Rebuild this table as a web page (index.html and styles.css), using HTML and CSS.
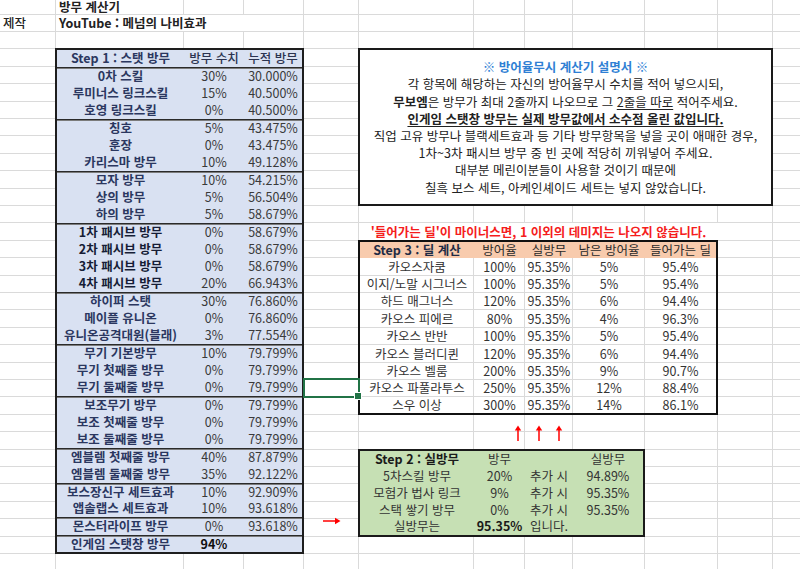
FILE: index.html
```html
<!DOCTYPE html>
<html lang="ko">
<head>
<meta charset="utf-8">
<title>방무 계산기</title>
<link rel="stylesheet" href="styles.css">
</head>
<body>
<div class="sheet">
  <div class="cell title">방무 계산기</div>
  <div class="cell maker-label">제작</div>
  <div class="cell maker">YouTube : 메넘의 나비효과</div>

  <section class="step1">
    <div class="s1-row head"><span class="lbl">Step 1 : 스탯 방무</span><span class="hd">방무 수치</span><span class="hd">누적 방무</span></div>
    <div class="s1-row sep"><span class="lbl">0차 스킬</span><span>30%</span><span>30.000%</span></div>
    <div class="s1-row"><span class="lbl">루미너스 링크스킬</span><span>15%</span><span>40.500%</span></div>
    <div class="s1-row"><span class="lbl">호영 링크스킬</span><span>0%</span><span>40.500%</span></div>
    <div class="s1-row sep"><span class="lbl">칭호</span><span>5%</span><span>43.475%</span></div>
    <div class="s1-row"><span class="lbl">훈장</span><span>0%</span><span>43.475%</span></div>
    <div class="s1-row"><span class="lbl">카리스마 방무</span><span>10%</span><span>49.128%</span></div>
    <div class="s1-row sep"><span class="lbl">모자 방무</span><span>10%</span><span>54.215%</span></div>
    <div class="s1-row"><span class="lbl">상의 방무</span><span>5%</span><span>56.504%</span></div>
    <div class="s1-row"><span class="lbl">하의 방무</span><span>5%</span><span>58.679%</span></div>
    <div class="s1-row sep"><span class="lbl dark">1차 패시브 방무</span><span>0%</span><span>58.679%</span></div>
    <div class="s1-row"><span class="lbl dark">2차 패시브 방무</span><span>0%</span><span>58.679%</span></div>
    <div class="s1-row"><span class="lbl dark">3차 패시브 방무</span><span>0%</span><span>58.679%</span></div>
    <div class="s1-row"><span class="lbl dark">4차 패시브 방무</span><span>20%</span><span>66.943%</span></div>
    <div class="s1-row sep"><span class="lbl">하이퍼 스탯</span><span>30%</span><span>76.860%</span></div>
    <div class="s1-row"><span class="lbl">메이플 유니온</span><span>0%</span><span>76.860%</span></div>
    <div class="s1-row"><span class="lbl">유니온공격대원(블래)</span><span>3%</span><span>77.554%</span></div>
    <div class="s1-row sep"><span class="lbl">무기 기본방무</span><span>10%</span><span>79.799%</span></div>
    <div class="s1-row"><span class="lbl">무기 첫째줄 방무</span><span>0%</span><span>79.799%</span></div>
    <div class="s1-row"><span class="lbl">무기 둘째줄 방무</span><span>0%</span><span>79.799%</span></div>
    <div class="s1-row sep"><span class="lbl">보조무기 방무</span><span>0%</span><span>79.799%</span></div>
    <div class="s1-row"><span class="lbl">보조 첫째줄 방무</span><span>0%</span><span>79.799%</span></div>
    <div class="s1-row"><span class="lbl">보조 둘째줄 방무</span><span>0%</span><span>79.799%</span></div>
    <div class="s1-row sep"><span class="lbl">엠블렘 첫째줄 방무</span><span>40%</span><span>87.879%</span></div>
    <div class="s1-row"><span class="lbl">엠블렘 둘째줄 방무</span><span>35%</span><span>92.122%</span></div>
    <div class="s1-row sep"><span class="lbl">보스장신구 세트효과</span><span>10%</span><span>92.909%</span></div>
    <div class="s1-row"><span class="lbl">앱솔랩스 세트효과</span><span>10%</span><span>93.618%</span></div>
    <div class="s1-row sep"><span class="lbl">몬스터라이프 방무</span><span>0%</span><span>93.618%</span></div>
    <div class="s1-row sep"><span class="lbl">인게임 스탯창 방무</span><span class="strong">94%</span><span></span></div>
  </section>

  <div class="selected"></div>

  <section class="guide">
    <p class="guide-title">※ 방어율무시 계산기 설명서 ※</p>
    <p>각 항목에 해당하는 자신의 방어율무시 수치를 적어 넣으시되,</p>
    <p><b>무보엠</b>은 방무가 최대 2줄까지 나오므로 그 <u>2줄을 따로</u> 적어주세요.</p>
    <p><b><u>인게임 스탯창 방무는 실제 방무값에서 소수점 올린 값입니다.</u></b></p>
    <p>직업 고유 방무나 블랙세트효과 등 기타 방무항목을 넣을 곳이 애매한 경우,</p>
    <p>1차~3차 패시브 방무 중 빈 곳에 적당히 끼워넣어 주세요.</p>
    <p>대부분 메린이분들이 사용할 것이기 때문에</p>
    <p>칠흑 보스 세트, 아케인셰이드 세트는 넣지 않았습니다.</p>
  </section>

  <div class="note">'들어가는 딜'이 마이너스면, 1 이외의 데미지는 나오지 않습니다.</div>

  <section class="step3">
    <span class="th first">Step 3 : 딜 계산</span><span class="th">방어율</span><span class="th">실방무</span><span class="th">남은 방어율</span><span class="th">들어가는 딜</span>
    <span>카오스자쿰</span><span>100%</span><span>95.35%</span><span>5%</span><span>95.4%</span>
    <span>이지/노말 시그너스</span><span>100%</span><span>95.35%</span><span>5%</span><span>95.4%</span>
    <span>하드 매그너스</span><span>120%</span><span>95.35%</span><span>6%</span><span>94.4%</span>
    <span>카오스 피에르</span><span>80%</span><span>95.35%</span><span>4%</span><span>96.3%</span>
    <span>카오스 반반</span><span>100%</span><span>95.35%</span><span>5%</span><span>95.4%</span>
    <span>카오스 블러디퀸</span><span>120%</span><span>95.35%</span><span>6%</span><span>94.4%</span>
    <span>카오스 벨룸</span><span>200%</span><span>95.35%</span><span>9%</span><span>90.7%</span>
    <span>카오스 파풀라투스</span><span>250%</span><span>95.35%</span><span>12%</span><span>88.4%</span>
    <span>스우 이상</span><span>300%</span><span>95.35%</span><span>14%</span><span>86.1%</span>
  </section>

  <div class="up-arrows">
    <svg class="up" viewBox="0 0 8 16" width="8" height="16"><path d="M4 16V4" stroke="#ff0000" stroke-width="1.5"/><path d="M0.8 5.5L4 0.5L7.2 5.5Z" fill="#ff0000"/></svg>
    <svg class="up" viewBox="0 0 8 16" width="8" height="16"><path d="M4 16V4" stroke="#ff0000" stroke-width="1.5"/><path d="M0.8 5.5L4 0.5L7.2 5.5Z" fill="#ff0000"/></svg>
    <svg class="up" viewBox="0 0 8 16" width="8" height="16"><path d="M4 16V4" stroke="#ff0000" stroke-width="1.5"/><path d="M0.8 5.5L4 0.5L7.2 5.5Z" fill="#ff0000"/></svg>
  </div>

  <div class="right-arrow">
    <svg viewBox="0 0 18 8" width="18" height="8"><path d="M0 4H13" stroke="#ff0000" stroke-width="1.5"/><path d="M12 0.8L17.5 4L12 7.2Z" fill="#ff0000"/></svg>
  </div>

  <section class="step2">
    <span class="bold">Step 2 : 실방무</span><span>방무</span><span></span><span>실방무</span>
    <span>5차스킬 방무</span><span>20%</span><span>추가 시</span><span>94.89%</span>
    <span>모험가 법사 링크</span><span>9%</span><span>추가 시</span><span>95.35%</span>
    <span>스택 쌓기 방무</span><span>0%</span><span>추가 시</span><span>95.35%</span>
    <span>실방무는</span><span class="bold">95.35%</span><span>입니다.</span><span></span>
  </section>
</div>
</body>
</html>
```

FILE: styles.css
```css
* { box-sizing: border-box; }

html, body {
  margin: 0;
  padding: 0;
  background: #ffffff;
  overflow: hidden;
}

body {
  font-family: "Noto Sans CJK KR", "Noto Sans", sans-serif;
  font-size: 12.5px;
  color: #333333;
}

.sheet {
  width: 800px;
  height: 569px;
  overflow: hidden;
  display: grid;
  grid-template-columns: 56px 128px 60px 60px 55px 115px 51px 48px 72px 73px 55px 1fr;
  grid-template-rows: 15px repeat(6, 17px 17px 18px 17px 18px) 17px 17px;
  background-color: #ffffff;
  background-image:
    linear-gradient(to right,
      transparent 55px, #dadada 55px 56px,
      transparent 56px 183px, #dadada 183px 184px,
      transparent 184px 243px, #dadada 243px 244px,
      transparent 244px 303px, #dadada 303px 304px,
      transparent 304px 358px, #dadada 358px 359px,
      transparent 359px 473px, #dadada 473px 474px,
      transparent 474px 524px, #dadada 524px 525px,
      transparent 525px 572px, #dadada 572px 573px,
      transparent 573px 644px, #dadada 644px 645px,
      transparent 645px 717px, #dadada 717px 718px,
      transparent 718px 772px, #dadada 772px 773px,
      transparent 773px),
    linear-gradient(to bottom,
      transparent 16px, #dadada 16px 17px,
      transparent 17px 33px, #dadada 33px 34px,
      transparent 34px 51px, #dadada 51px 52px,
      transparent 52px 68px, #dadada 68px 69px,
      transparent 69px 86px, #dadada 86px 87px);
  background-size: 100% 100%, 100% 87px;
  background-position: 0 0, 0 15px;
  background-repeat: no-repeat, repeat-y;
}

.cell {
  display: flex;
  align-items: center;
  padding-left: 3px;
  white-space: nowrap;
  line-height: 1;
  color: #222222;
}

.title { grid-column: 2 / 4; grid-row: 1; font-weight: 700; }
.maker-label { grid-column: 1; grid-row: 2; font-weight: 500; }
.maker {
  grid-column: 2 / 4;
  grid-row: 2;
  font-weight: 700;
  background: #ffffff;
  margin-bottom: 1px;
}

/* Step 1 */
.step1 {
  grid-column: 2 / 5;
  grid-row: 4 / 33;
  margin: -1px 0 0 -1px;
  border: 2px solid #1e1e1e;
  background: #d9e1f2;
  display: grid;
  grid-template-rows: repeat(29, 1fr);
}

.s1-row {
  display: grid;
  grid-template-columns: 127px 60px 1fr;
  align-items: center;
  line-height: 1;
  white-space: nowrap;
}

.s1-row > span {
  text-align: center;
  color: #3a3a3a;
}

.s1-row .lbl {
  font-weight: 700;
  color: #2b3760;
}

.s1-row .lbl.dark { color: #161d36; }

.s1-row .hd {
  font-weight: 500;
  color: #2b3350;
}

.s1-row .strong {
  font-weight: 700;
  color: #111111;
}

.s1-row.sep {
  border-top: 1px solid #2a2a2a;
  box-shadow: inset 0 1px 0 #7c7c7c;
}

.selected {
  grid-column: 5;
  grid-row: 23;
  margin: -2px -1px -1px -1px;
  border: 2px solid #217346;
  position: relative;
}

.selected::after {
  content: "";
  position: absolute;
  right: -4px;
  bottom: -4px;
  width: 6px;
  height: 6px;
  background: #217346;
  border: 1px solid #ffffff;
}

/* Guide box */
.guide {
  grid-column: 6 / 12;
  grid-row: 4 / 13;
  margin: -1px 0 0 -1px;
  border: 2px solid #1a1a1a;
  background: #ffffff;
  display: flex;
  flex-direction: column;
  justify-content: center;
  align-items: center;
  color: #222222;
}

.guide p {
  margin: 0;
  line-height: 17.2px;
  white-space: nowrap;
}

.guide .guide-title {
  color: #2f7fd4;
  font-weight: 700;
}

.guide u {
  text-underline-offset: 2px;
}

/* Note */
.note {
  grid-column: 6 / 11;
  grid-row: 14;
  background: #ffffff;
  display: flex;
  align-items: center;
  justify-content: center;
  color: #f51d1d;
  font-weight: 700;
  white-space: nowrap;
  line-height: 1;
}

/* Step 3 */
.step3 {
  grid-column: 6 / 11;
  grid-row: 15 / 25;
  margin: -1px 0 0 -1px;
  border: 2px solid #111111;
  display: grid;
  grid-template-columns: 114px 51px 48px 72px 1fr;
  grid-template-rows: 16px 18px 17px 17px 18px 17px 18px 17px 17px 1fr;
}

.step3 > span {
  display: flex;
  align-items: center;
  justify-content: center;
  white-space: nowrap;
  line-height: 1;
  color: #333333;
}

.step3 > .th {
  background: #f8cbad;
  color: #2a2a2a;
}

.step3 > .th.first {
  font-weight: 700;
  color: #1f2b45;
}

/* Arrows */
.up-arrows {
  grid-column: 6 / 11;
  grid-row: 25 / 27;
  display: flex;
  justify-content: center;
  align-items: flex-start;
  gap: 12.5px;
  padding-top: 10px;
}

.right-arrow {
  grid-column: 5;
  grid-row: 30 / 32;
  display: flex;
  justify-content: center;
  align-items: flex-start;
  padding-top: 15px;
}

/* Step 2 */
.step2 {
  grid-column: 6 / 10;
  grid-row: 27 / 32;
  margin: -1px 0 0 -1px;
  border: 2px solid #1a1a1a;
  background: #c6e0b4;
  display: grid;
  grid-template-columns: 114px 51px 48px 1fr;
  grid-template-rows: repeat(5, 1fr);
}

.step2 > span {
  display: flex;
  align-items: center;
  justify-content: center;
  white-space: nowrap;
  line-height: 1;
  color: #333333;
}

.step2 > .bold {
  font-weight: 700;
  color: #1a1a1a;
}
```
